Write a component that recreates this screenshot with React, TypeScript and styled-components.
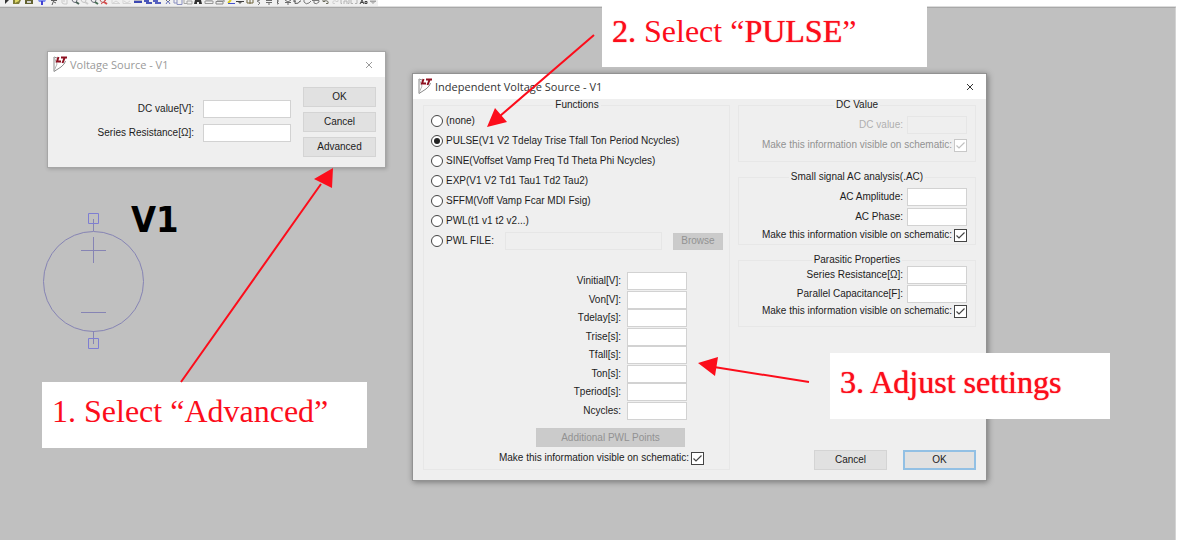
import React, { useId } from "react";
import styled, { createGlobalStyle, css } from "styled-components";

const GlobalStyle = createGlobalStyle`
  *, *::before, *::after { box-sizing: border-box; }
  body {
    margin: 0;
    background: #fff;
    font-family: "Liberation Sans", Arial, sans-serif;
    font-size: 10px;
    line-height: 12px;
    color: #1c1c1c;
  }
  button, input { font: inherit; color: inherit; margin: 0; }
`;

const RED = "#fc0d1b";

/* ---------- page ---------- */

const Page = styled.div`
  position: relative;
  display: flex;
  flex-direction: column;
  min-height: 100vh;
  overflow: hidden;
`;

const Workspace = styled.main`
  flex: 1;
  margin-right: 8px;
  background: #c0c0c0;
  border-top: 1px solid #a8a8a8;
  border-right: 1px solid #d4d4d4;
`;

/* ---------- toolbar ---------- */

const Toolbar = styled.header`
  display: flex;
  height: 7px;
  margin-right: 8px;
  border-bottom: 1px solid #dcdcdc;
`;

const ToolStrip = styled.div`
  display: flex;
  gap: 1px;
  padding-left: 1px;
  background: #f0f0f0;
`;

const ToolGroup = styled.div<{ $width: number }>`
  display: grid;
  grid-auto-flow: column;
  grid-auto-columns: minmax(0, 1fr);
  width: ${(p) => p.$width}px;
`;

const ToolButton = styled.button`
  display: flex;
  justify-content: center;
  height: 6px;
  padding: 0;
  border: 0;
  background: none;
  opacity: 0.85;
  svg { flex: none; }
`;

const s = (d: string, stroke = "#333", w = 1) => (
  <path d={d} fill="none" stroke={stroke} strokeWidth={w} />
);
const f = (d: string, fill: string) => <path d={d} fill={fill} />;

type Tool = [string, React.ReactNode];

const lens = (color: string, mark = "#556") => (
  <>
    {s("M1 0 Q2 3 5 2.500 L6 0", mark)}
    {s("M5 2 L8 4", color, 2)}
  </>
);

const toolGroups: { width: number; tools: Tool[] }[] = [
  {
    width: 21,
    tools: [
      ["Run", f("M4 0 H8 L4 4 Z", "#111")],
      ["Open", <>{f("M1 0 H9 L7 4 H1 Z", "#6c6a16")}{f("M3 0 H7 V1 L3 3 Z", "#dcd44c")}</>],
    ],
  },
  { width: 12, tools: [["Save", <>{f("M1 0 H9 V4 H1 Z", "#4a4a10")}{f("M3 1 H7 V3 H3 Z", "#ccc")}</>]] },
  { width: 12, tools: [["Control panel", <>{f("M1 0 H9 L8 2 H2 Z", "#6a7cf0")}{s("M5 1 V5", "#2222cc", 2)}</>]] },
  {
    width: 21,
    tools: [
      ["Simulate", <>{s("M2 .5 H8 M5 0 L3 5 M5 2 L7 3", "#444")}</>],
      ["Halt", <>{s("M2 0 V3 L4 4 H7 V0 M4 0 V2", "#c4c4c4")}</>],
    ],
  },
  {
    width: 38,
    tools: [
      ["Zoom in", lens("#2d4b3c")],
      ["Pan", lens("#c8c8c8", "#bbb")],
      ["Zoom out", lens("#2d5b3c")],
      ["Zoom fit", <>{lens("#d03030", "#a44")}{s("M2 4 L7 0", "#d03030")}</>],
    ],
  },
  {
    width: 22,
    tools: [
      ["Autorange", s("M1 0 V3.500 H9 M2 3 L5 1 L8 3", "#d0d0d0")],
      ["Plot settings", s("M1 0 V3.500 H9 M2 1 L5 3 L8 1", "#d0d0d0")],
    ],
  },
  {
    width: 29,
    tools: [
      ["Tile", <>{f("M1 0 H9 V1 H1 Z", "#aab")}{f("M1 1 H9 V3 H1 Z", "#1c2aa8")}</>],
      ["Cascade", <>{f("M1 0 H6 V2 H1 Z M3 2 H9 V4 H3 Z", "#2c3ab0")}</>],
      ["Close all", <>{f("M1 0 H6 V2 H1 Z M3 2 H9 V4 H3 Z", "#3a48b8")}</>],
    ],
  },
  {
    width: 40,
    tools: [
      ["Cut", <>{s("M3 0 L5 2 L7 0", "#555")}{s("M3 4 L5 1 L7 4", "#4c58b0")}</>],
      ["Copy", s("M1 0 V3 H4 M4 0 V4.500 H9 V0", "#7a80b8")],
      ["Paste", s("M1 0 V3.500 H4 M4 1 H9 V4 H4 Z", "#999")],
      ["Find", <>{f("M2 0 H8 L9 4 H6 V2 H4 V4 H1 Z", "#111")}</>],
    ],
  },
  {
    width: 21,
    tools: [
      ["Print", s("M2 0 H8 M1 1 H9 V3.500 H1 Z", "#888")],
      ["Print preview", s("M2 0 H9 V2 M1 1.500 H8 V4 H1 Z", "#777")],
    ],
  },
  {
    width: 152,
    tools: [
      ["Wire", <>{s("M2 3 L5 0", "#d8c800", 2)}{s("M2 3.500 H9", "#2334c8")}</>],
      ["Ground", <>{s("M1 1.500 H9", "#222")}{f("M3 2 H7 L5 4 Z", "#555")}</>],
      ["Label net", s("M2 0 V3 H8 V0 M5 0 V4", "#5c5020")],
      ["Resistor", s("M6 0 L3 1 L6 3 L4 5", "#666")],
      ["Capacitor", s("M2 .5 H8 M2 2.500 H8 M5 2 V5", "#555")],
      ["Inductor", s("M4 0 Q7 1 4 2 Q7 4 4 4", "#444")],
      ["Diode", s("M2 0 L5 2 L8 0 M2 2.500 H8 M5 3 V5", "#555")],
      ["Component", s("M1 1 H3 V3.500 Q7 4 8 1 H9 M3 0 V2", "#444")],
      ["Move", s("M2 0 V2 Q4 5 7 3 L9 1", "#666")],
      ["Drag", s("M1 .5 H8 V2 Q5 5 3 3 V0", "#666")],
      ["Undo", s("M2 0 V1.500 H4 M3 1 Q8 0 7 3.500 H5", "#554")],
      ["Redo", s("M8 0 V1.500 H6 M6 1 Q2 0 3 3.500 H5", "#ccc")],
      ["Rotate", s("M1 0 V3.500 H2 M4 4 V1 H7 V4 M9 0 V3.500 H8", "#aaa")],
      ["Mirror", s("M2 0 V3.500 H4 M8 0 V3.500 H6", "#aaa")],
      ["Text", <>{s("M1 4 L3 0 L5 4 M2 2.500 H4", "#222")}{s("M6 1.500 H8 V3.500 H6 Z", "#222")}</>],
      ["SPICE directive", s("M2 1.500 H8 M5 0 V4 M3 0 V2 H7 V0", "#999")],
    ],
  },
];

/* ---------- dialogs ---------- */

const Dialog = styled.section<{ $x: number; $y: number; $width: number; $active?: boolean }>`
  position: absolute;
  left: ${(p) => p.$x}px;
  top: ${(p) => p.$y}px;
  width: ${(p) => p.$width}px;
  background: #efefef;
  ${(p) =>
    p.$active
      ? css`box-shadow: 0 0 0 1px #929292, 1px 1px 6px 1px rgba(0, 0, 0, 0.4);`
      : css`box-shadow: 0 0 0 1px #a6a6a6, 1px 1px 4px 1px rgba(0, 0, 0, 0.2);`}
`;

const TitleBar = styled.div<{ $active?: boolean }>`
  display: flex;
  align-items: center;
  gap: 2px;
  height: 25px;
  padding: 0 8px 0 5px;
  background: #fff;
  color: ${(p) => (p.$active ? "#333" : "#9a9a9a")};
`;

const Title = styled.h2`
  flex: 1;
  margin: 0;
  font: 400 11px/16px "Open Sans", "Noto Sans", sans-serif;
`;

const CloseButton = styled.button`
  display: flex;
  padding: 4px;
  border: 0;
  background: none;
`;

const Logo = () => (
  <svg width="15" height="17" viewBox="0 0 15 17" aria-hidden="true">
    <path d="M4 2 L1 1 V15.500 L8 11 Q12 8 12.500 5" fill="none" stroke="#8a8a8a" />
    <path d="M1 1 L4 8 L1 15" fill="none" stroke="#b4b4b4" />
    <path d="M5.500 1 L4 5.500 H8" fill="none" stroke="#8e1020" strokeWidth="2" />
    <path d="M8 1.500 H14 M11.500 2 L9.500 7" fill="none" stroke="#8e1020" strokeWidth="2" />
  </svg>
);

const Cross = () => (
  <svg width="8" height="8" viewBox="0 0 8 8" aria-hidden="true">
    <path d="M1 1 L7 7 M7 1 L1 7" fill="none" stroke="currentColor" strokeWidth="1" />
  </svg>
);

const PushButton = styled.button<{ $width: number; $height?: number; $primary?: boolean }>`
  width: ${(p) => p.$width}px;
  height: ${(p) => p.$height ?? 20}px;
  padding: 0;
  border: ${(p) => (p.$primary ? "2px solid #92c0e4" : "1px solid #d4d4d4")};
  background: #e1e1e1;
  &:disabled {
    border-color: #cacaca;
    background: #cbcbcb;
    color: #929292;
  }
`;

const TextBox = styled.input<{ $width?: number }>`
  width: ${(p) => p.$width ?? 60}px;
  height: 18px;
  padding: 0 3px;
  border: 1px solid #d2d2d2;
  background: #fff;
  &:disabled {
    border-color: #e6e6e6;
    background: #efefef;
  }
`;

const FieldRow = styled.div<{ $gap?: number; $muted?: boolean }>`
  display: flex;
  align-items: center;
  justify-content: flex-end;
  gap: ${(p) => p.$gap ?? 4}px;
  color: ${(p) => (p.$muted ? "#b0b0b0" : "inherit")};
`;

const Field = ({ label, gap, width, disabled }: { label: string; gap?: number; width?: number; disabled?: boolean }) => {
  const id = useId();
  return (
    <FieldRow $gap={gap} $muted={disabled}>
      <label htmlFor={id}>{label}</label>
      <TextBox id={id} type="text" $width={width} disabled={disabled} />
    </FieldRow>
  );
};

const CheckWrap = styled.span`
  position: relative;
  display: flex;
  svg {
    position: absolute;
    inset: 0;
    pointer-events: none;
  }
`;

const CheckInput = styled.input`
  appearance: none;
  width: 13px;
  height: 13px;
  border: 1px solid #444;
  background: #fff;
  &:disabled { border-color: #c8c8c8; }
  &:not(:checked) + svg { display: none; }
`;

const CheckRow = styled.div<{ $muted?: boolean }>`
  display: flex;
  align-items: center;
  justify-content: flex-end;
  gap: 2px;
  height: 14px;
  color: ${(p) => (p.$muted ? "#929292" : "inherit")};
`;

const VisibleCheck = ({ disabled }: { disabled?: boolean }) => {
  const id = useId();
  return (
    <CheckRow $muted={disabled}>
      <label htmlFor={id}>Make this information visible on schematic:</label>
      <CheckWrap>
        <CheckInput id={id} type="checkbox" defaultChecked disabled={disabled} />
        <svg width="13" height="13" viewBox="0 0 13 13" aria-hidden="true">
          <path d="M2.500 6.500 L5 9 L10.500 3.500" fill="none" stroke={disabled ? "#c0c0c0" : "#444"} strokeWidth="1.200" />
        </svg>
      </CheckWrap>
    </CheckRow>
  );
};

/* ---------- simple source dialog ---------- */

const SimpleBody = styled.div`
  display: flex;
  justify-content: flex-end;
  gap: 12px;
  padding: 10px 9px 10px 0;
`;

const SimpleFields = styled.div`
  display: flex;
  flex-direction: column;
  gap: 6px;
  padding-top: 13px;
`;

const ButtonStack = styled.div`
  display: flex;
  flex-direction: column;
  gap: 5px;
`;

/* ---------- independent source dialog ---------- */

const SourceBody = styled.div`
  display: grid;
  grid-template-columns: 307px 1fr;
  gap: 8px;
  padding: 0 10px 10px;
`;

const Group = styled.fieldset<{ $gap?: number; $pad?: string }>`
  display: flex;
  flex-direction: column;
  gap: ${(p) => p.$gap ?? 2}px;
  min-width: 0;
  margin: 0;
  padding: ${(p) => p.$pad ?? "0 8px"};
  border: 1px solid #e7e7e7;
`;

const Legend = styled.legend`
  margin: 0 auto;
  padding: 0 2px;
`;

const RadioRow = styled.div`
  display: flex;
  align-items: center;
  height: 20px;
  gap: 3px;
  white-space: nowrap;
`;

const Radio = styled.input`
  appearance: none;
  display: grid;
  place-items: center;
  flex: none;
  width: 12px;
  height: 12px;
  border: 1px solid #444;
  border-radius: 50%;
  background: #fff;
  &:checked::before {
    content: "";
    width: 6px;
    height: 6px;
    border-radius: 50%;
    background: #222;
  }
`;

const FileBox = styled(TextBox)`
  margin: 0 8px 0 auto;
`;

const Functions = styled.div`
  display: flex;
  flex-direction: column;
`;

const ValueGrid = styled.div`
  display: grid;
  grid-template-rows: repeat(8, 1fr);
  height: 148px;
  margin-top: 21px;
  padding-right: 36px;
`;

const WideAction = styled.div`
  display: flex;
  justify-content: flex-end;
  padding: 8px 38px 4px 0;
`;

const PulseCheck = styled.div`
  padding-right: 19px;
`;

const SideColumn = styled.div`
  display: flex;
  flex-direction: column;
  gap: 9px;
`;

const ActionRow = styled.div`
  display: flex;
  justify-content: flex-end;
  gap: 16px;
  margin-top: auto;
`;

const functionOptions = [
  "(none)",
  "PULSE(V1 V2 Tdelay Trise Tfall Ton Period Ncycles)",
  "SINE(Voffset Vamp Freq Td Theta Phi Ncycles)",
  "EXP(V1 V2 Td1 Tau1 Td2 Tau2)",
  "SFFM(Voff Vamp Fcar MDI Fsig)",
  "PWL(t1 v1 t2 v2...)",
  "PWL FILE:",
];

const pulseFields = [
  "Vinitial[V]:",
  "Von[V]:",
  "Tdelay[s]:",
  "Trise[s]:",
  "Tfall[s]:",
  "Ton[s]:",
  "Tperiod[s]:",
  "Ncycles:",
];

/* ---------- schematic and annotations ---------- */

const Symbol = styled.svg`
  position: absolute;
  left: 40px;
  top: 210px;
`;

const PartName = styled.div`
  position: absolute;
  left: 131px;
  top: 198px;
  font: 700 36px/44px "DejaVu Sans Condensed", "DejaVu Sans", sans-serif;
  color: #000;
`;

const Callout = styled.p<{ $x: number; $y: number; $width: number; $height: number }>`
  position: absolute;
  left: ${(p) => p.$x}px;
  top: ${(p) => p.$y}px;
  width: ${(p) => p.$width}px;
  height: ${(p) => p.$height}px;
  margin: 0;
  padding: 11px 10px;
  background: #fff;
  color: ${RED};
  font: 32px/36px "Liberation Serif", "Times New Roman", serif;
  white-space: nowrap;
`;

const Heavy = styled.span`
  text-shadow: 0 0 1px ${RED};
`;

const Arrows = styled.svg`
  position: absolute;
  inset: 0;
  width: 100%;
  height: 100%;
  pointer-events: none;
`;

export default function App() {
  return (
    <Page>
      <GlobalStyle />
      <Toolbar>
        <ToolStrip>
          {toolGroups.map((group, i) => (
            <ToolGroup key={i} $width={group.width}>
              {group.tools.map(([name, art]) => (
                <ToolButton key={name} type="button" aria-label={name}>
                  <svg width="10" height="6" viewBox="0 0 10 6" aria-hidden="true">{art}</svg>
                </ToolButton>
              ))}
            </ToolGroup>
          ))}
        </ToolStrip>
      </Toolbar>

      <Workspace>
        <Symbol width="108" height="144" viewBox="0 0 108 144" fill="none" stroke="#8684b4" aria-hidden="true">
          <circle cx="53.500" cy="71.500" r="50" />
          <path d="M53.500 9 V21 M53.500 121 V134 M53.500 27 V53 M41 40.500 H66 M41 102.500 H66" />
          <path d="M48.500 3.500 H58.500 V13.500 H48.500 Z M48.500 128.500 H58.500 V138.500 H48.500 Z" stroke="#7e7ed2" />
        </Symbol>
        <PartName>V1</PartName>

        <Dialog $x={48} $y={52} $width={337} aria-label="Voltage Source - V1">
          <TitleBar>
            <Logo />
            <Title>Voltage Source - V1</Title>
            <CloseButton type="button" aria-label="Close"><Cross /></CloseButton>
          </TitleBar>
          <SimpleBody>
            <SimpleFields>
              <Field label="DC value[V]:" gap={9} width={88} />
              <Field label="Series Resistance[Ω]:" gap={9} width={88} />
            </SimpleFields>
            <ButtonStack>
              <PushButton type="button" $width={73}>OK</PushButton>
              <PushButton type="button" $width={73}>Cancel</PushButton>
              <PushButton type="button" $width={73}>Advanced</PushButton>
            </ButtonStack>
          </SimpleBody>
        </Dialog>

        <Dialog $x={413} $y={74} $width={573} $active aria-label="Independent Voltage Source - V1">
          <TitleBar $active>
            <Logo />
            <Title>Independent Voltage Source - V1</Title>
            <CloseButton type="button" aria-label="Close"><Cross /></CloseButton>
          </TitleBar>
          <SourceBody>
            <Group $gap={0} $pad="0 6px 4px 7px">
              <Legend>Functions</Legend>
              <Functions>
                {functionOptions.map((name, i) => (
                  <RadioRow key={name}>
                    <Radio type="radio" name="fn" id={`fn-${i}`} defaultChecked={i === 1} />
                    <label htmlFor={`fn-${i}`}>{name}</label>
                    {i === 6 && (
                      <>
                        <FileBox type="text" aria-label="PWL file" $width={157} disabled />
                        <PushButton type="button" $width={50} $height={17} disabled>Browse</PushButton>
                      </>
                    )}
                  </RadioRow>
                ))}
              </Functions>
              <ValueGrid>
                {pulseFields.map((label) => (
                  <Field key={label} label={label} gap={6} />
                ))}
              </ValueGrid>
              <WideAction>
                <PushButton type="button" $width={149} $height={19} disabled>Additional PWL Points</PushButton>
              </WideAction>
              <PulseCheck><VisibleCheck /></PulseCheck>
            </Group>

            <SideColumn>
              <Group $gap={4} $pad="5px 8px 9px">
                <Legend>DC Value</Legend>
                <Field label="DC value:" disabled />
                <VisibleCheck disabled />
              </Group>
              <Group $pad="5px 8px 2px">
                <Legend>Small signal AC analysis(.AC)</Legend>
                <Field label="AC Amplitude:" />
                <Field label="AC Phase:" />
                <VisibleCheck />
              </Group>
              <Group $gap={1} $pad="0 8px 8px">
                <Legend>Parasitic Properties</Legend>
                <Field label="Series Resistance[Ω]:" />
                <Field label="Parallel Capacitance[F]:" />
                <VisibleCheck />
              </Group>
              <ActionRow>
                <PushButton type="button" $width={73}>Cancel</PushButton>
                <PushButton type="button" $width={73} $primary>OK</PushButton>
              </ActionRow>
            </SideColumn>
          </SourceBody>
        </Dialog>
      </Workspace>

      <Callout $x={42} $y={382} $width={325} $height={66}>1. Select “Advanced”</Callout>
      <Callout $x={602} $y={2} $width={325} $height={65}>
        <Heavy>2.</Heavy> Select “<Heavy>PULSE</Heavy>”
      </Callout>
      <Callout $x={830} $y={353} $width={280} $height={66}><Heavy>3. Adjust settings</Heavy></Callout>

      <Arrows aria-hidden="true" stroke={RED} strokeWidth="2" fill={RED}>
        <path d="M181 382 L321 184 M594 35 L500 116 M809 382 L714 367" />
        <path stroke="none" d="M333 168 L314 179 L332 188 Z M487 127 L495 108 L507 122 Z M698 363 L718 357 L715 376 Z" />
      </Arrows>
    </Page>
  );
}
